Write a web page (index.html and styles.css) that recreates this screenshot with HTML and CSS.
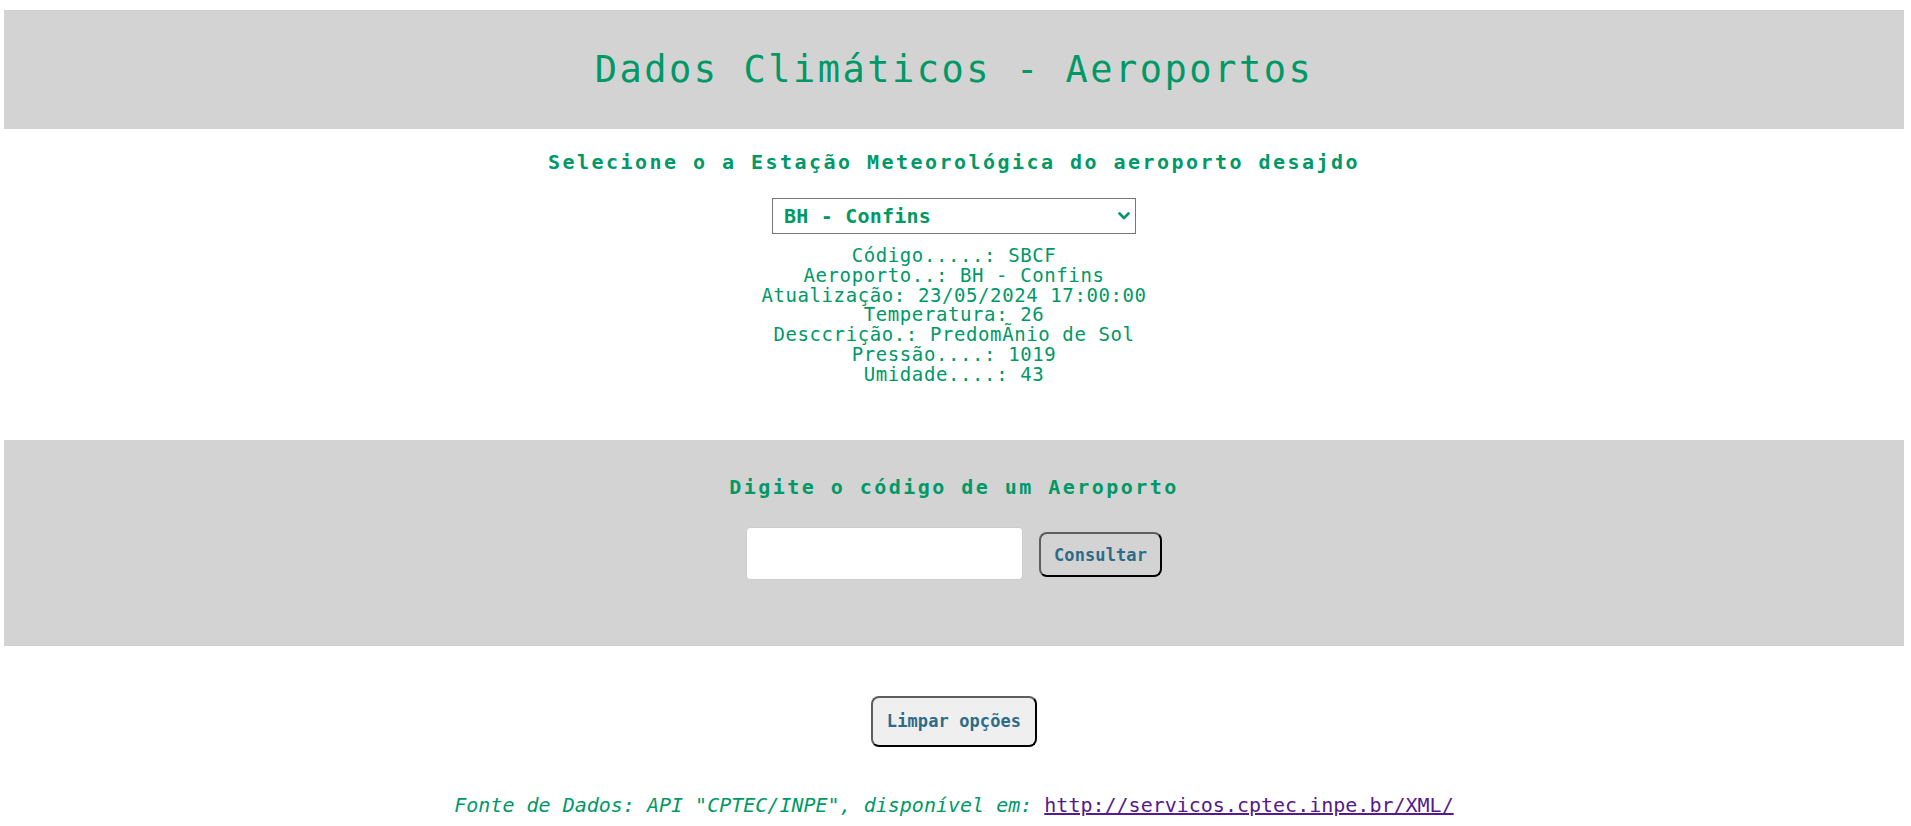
FILE: index.html
```html
<!DOCTYPE html>
<html lang="pt-BR">
<head>
<meta charset="utf-8">
<title>Dados Climáticos - Aeroportos</title>
<link rel="stylesheet" href="styles.css">
</head>
<body>
<header class="topo">
  <h1 class="titulo">Dados Climáticos - Aeroportos</h1>
</header>
<main class="conteudo">
  <section class="estacao">
    <h2 class="subtitulo">Selecione o a Estação Meteorológica do aeroporto desajdo</h2>
    <div class="seletor">
      <select class="lista">
        <option>BH - Confins</option>
      </select>
      <svg class="seta" width="12" height="8" viewBox="0 0 12 8" aria-hidden="true">
        <polyline points="1.5,1.5 6,6 10.5,1.5" fill="none" stroke="#009966" stroke-width="2.6" stroke-linecap="round" stroke-linejoin="round"/>
      </svg>
    </div>
    <div class="dados">
      <div>Código.....: SBCF</div>
      <div>Aeroporto..: BH - Confins</div>
      <div>Atualização: 23/05/2024 17:00:00</div>
      <div>Temperatura: 26</div>
      <div>Desccrição.: PredomÃnio de Sol</div>
      <div>Pressão....: 1019</div>
      <div>Umidade....: 43</div>
    </div>
  </section>
  <section class="consulta">
    <h2 class="subtitulo subtitulo-consulta">Digite o código de um Aeroporto</h2>
    <div class="linha">
      <input class="codigo" type="text">
      <button class="botao botao-consultar" type="button">Consultar</button>
    </div>
  </section>
  <div class="acoes">
    <button class="botao botao-limpar" type="button">Limpar opções</button>
  </div>
  <p class="fonte">Fonte de Dados: API "CPTEC/INPE", disponível em: <a class="fonte-link" href="http://servicos.cptec.inpe.br/XML/">http://servicos.cptec.inpe.br/XML/</a></p>
</main>
</body>
</html>
```

FILE: styles.css
```css
html {
  background: #ffffff;
}

body {
  margin: 10px 7px 0 4px;
  font-family: "DejaVu Sans Mono", "Liberation Mono", monospace;
  color: #009966;
}

.topo {
  height: 119px;
  background: #d3d3d3;
  display: flex;
  align-items: center;
  justify-content: center;
}

.titulo {
  margin: 0;
  font-size: 37px;
  font-weight: normal;
  letter-spacing: 2.5px;
  line-height: normal;
  color: #009966;
}

.estacao {
  display: flex;
  flex-direction: column;
  align-items: center;
}

.subtitulo {
  margin: 22px 0 0;
  font-size: 20px;
  font-weight: bold;
  letter-spacing: 2.46px;
  line-height: 22px;
  text-align: center;
  color: #009966;
}

.seletor {
  position: relative;
  width: 364px;
  height: 36px;
  margin-top: 25px;
}

.lista {
  display: block;
  box-sizing: border-box;
  width: 100%;
  height: 36px;
  margin: 0;
  padding: 0 0 0 11px;
  appearance: none;
  -webkit-appearance: none;
  background: #ffffff;
  border: 1px solid #767676;
  border-radius: 0;
  font-family: "DejaVu Sans Mono", "Liberation Mono", monospace;
  font-size: 20px;
  font-weight: bold;
  letter-spacing: 0.2px;
  color: #009966;
}

.seta {
  position: absolute;
  right: 6px;
  top: 14px;
  pointer-events: none;
}

.dados {
  margin-top: 12px;
  font-size: 19px;
  letter-spacing: 0.6px;
  line-height: 19.83px;
  text-align: center;
}

.consulta {
  margin-top: 55px;
  padding: 36px 0 66px;
  background: #d3d3d3;
}

.subtitulo-consulta {
  margin: 0 0 29px;
}

.linha {
  display: flex;
  justify-content: center;
  align-items: center;
  gap: 16px;
}

.codigo {
  box-sizing: border-box;
  width: 277px;
  height: 53px;
  margin: 0;
  padding: 0 8px;
  background: #ffffff;
  border: 1px solid #cccccc;
  border-radius: 4px;
  font-family: "DejaVu Sans Mono", "Liberation Mono", monospace;
  font-size: 18px;
}

.botao {
  box-sizing: border-box;
  margin: 0;
  border-style: solid;
  border-width: 2px;
  border-color: #5e5e5e #000000 #000000 #5e5e5e;
  border-radius: 8px;
  font-family: "DejaVu Sans Mono", "Liberation Mono", monospace;
  font-size: 17px;
  font-weight: bold;
  letter-spacing: 0.1px;
  color: #2d6b87;
  cursor: pointer;
}

.botao-consultar {
  height: 45px;
  padding: 0 13px;
  margin-top: 3px;
  background: #d3d3d3;
}

.acoes {
  margin-top: 50px;
  display: flex;
  justify-content: center;
}

.botao-limpar {
  height: 51px;
  padding: 0 14px;
  background: #efefef;
}

.fonte {
  margin: 46px 0 0;
  font-size: 20px;
  font-style: italic;
  line-height: normal;
  text-align: center;
  color: #009966;
}

.fonte-link {
  color: #551a8b;
  font-style: normal;
  text-decoration: underline;
}
```
